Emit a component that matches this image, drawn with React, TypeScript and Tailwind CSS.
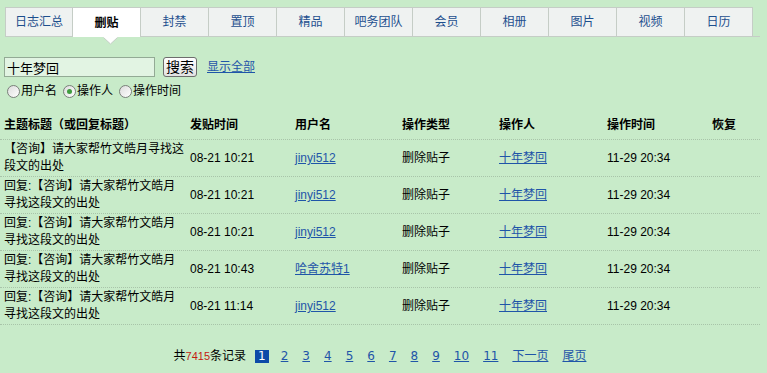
import React from 'react'

const tabs = ['日志汇总', '删贴', '封禁', '置顶', '精品', '吧务团队', '会员', '相册', '图片', '视频', '日历']

const rows = [
  { title: '【咨询】请大家帮竹文皓月寻找这段文的出处', time: '08-21 10:21', user: 'jinyi512' },
  { title: '回复:【咨询】请大家帮竹文皓月寻找这段文的出处', time: '08-21 10:21', user: 'jinyi512' },
  { title: '回复:【咨询】请大家帮竹文皓月寻找这段文的出处', time: '08-21 10:21', user: 'jinyi512' },
  { title: '回复:【咨询】请大家帮竹文皓月寻找这段文的出处', time: '08-21 10:43', user: '哈舍苏特1' },
  { title: '回复:【咨询】请大家帮竹文皓月寻找这段文的出处', time: '08-21 11:14', user: 'jinyi512' },
]

const grid = 'grid grid-cols-[190px_105px_107px_97px_108px_105px_48px] w-[760px]'

function Radio({ checked, label }: { checked?: boolean; label: string }) {
  return (
    <label className="flex items-center mr-[6px]">
      <span className="w-[13px] h-[13px] rounded-full border border-[#7a7f7a] bg-gradient-to-br from-[#dcdcdc] to-white flex items-center justify-center mr-[1px]">
        {checked && <span className="w-[5px] h-[5px] rounded-full bg-[#3f9c3f]" />}
      </span>
      <span className="text-[12px]">{label}</span>
    </label>
  )
}

export default function App() {
  return (
    <div className="w-[767px] h-[373px] overflow-hidden bg-[#c8ebc9] text-black font-['Liberation_Sans','Noto_Sans_CJK_SC',sans-serif]">
      {/* tabs */}
      <div className="pt-[7px] pl-[5px]">
        <div className="flex w-[755px] border-b border-[#c5cdc6]">
          {tabs.map((t, i) =>
            i === 1 ? (
              <div
                key={t}
                className="relative w-[68px] h-[30px] -mb-px bg-white border-t border-r border-[#c5cdc6] flex items-center justify-center text-[12px] font-bold text-black"
              >
                {t}
                <svg className="absolute left-[30px] top-[29px]" width="15" height="8" viewBox="0 0 15 8">
                  <polygon points="0,0 15,0 7.5,7" fill="white" />
                  <polyline points="0.5,0.5 7.5,7 14.5,0.5" fill="none" stroke="#c5cdc6" />
                </svg>
              </div>
            ) : (
              <div
                key={t}
                className={`w-[68px] h-[29px] bg-[#eff2f1] border-t border-r border-[#c5cdc6] flex items-center justify-center text-[12px] text-[#1d4f8e] ${
                  i === 0 ? 'border-l' : ''
                }`}
              >
                {t}
              </div>
            )
          )}
        </div>
      </div>

      {/* search */}
      <div className="flex items-center pl-[4px] mt-[20px] h-[20px]">
        <input
          readOnly
          value="十年梦回"
          className="w-[151px] h-[20px] border border-[#93aa95] bg-[#e2f4e3] px-[2px] text-[13px] outline-none"
        />
        <button className="ml-[8px] w-[34px] h-[20px] rounded-[3px] border border-[#6d6d6d] bg-gradient-to-b from-white to-[#e2e2e2] text-[14px] leading-none">
          搜索
        </button>
        <a className="ml-[10px] text-[12px] text-[#1f55a8] underline">显示全部</a>
      </div>

      <div className="flex items-center pl-[7px] mt-[6px] h-[16px]">
        <Radio label="用户名" />
        <Radio checked label="操作人" />
        <Radio label="操作时间" />
      </div>

      {/* table */}
      <div className="mt-[11px]">
        <div className={`${grid} h-[30px] items-center border-b border-dotted border-[#a8c4a9] text-[12px] font-bold`}>
          <div className="pl-[4px]">主题标题（或回复标题）</div>
          <div>发贴时间</div>
          <div>用户名</div>
          <div>操作类型</div>
          <div>操作人</div>
          <div>操作时间</div>
          <div>恢复</div>
        </div>
        {rows.map((r, i) => (
          <div key={i} className={`${grid} h-[37px] items-center border-b border-dotted border-[#a8c4a9] text-[12px]`}>
            <div className="pl-[4px] pr-[4px] leading-[17px]">{r.title}</div>
            <div>{r.time}</div>
            <div>
              <a className="text-[#1f55a8] underline">{r.user}</a>
            </div>
            <div>删除贴子</div>
            <div>
              <a className="text-[#1f55a8] underline">十年梦回</a>
            </div>
            <div>11-29 20:34</div>
            <div />
          </div>
        ))}
      </div>

      {/* pagination */}
      <div className="w-[760px] flex justify-center items-center mt-[23px] h-[16px] text-[12px]">
        <span>
          共<span className="text-[11px] text-[#c41a0f]">7415</span>条记录
        </span>
        <span className="ml-[9px] h-[13px] px-[3px] bg-[#0c4aa8] text-white flex items-center font-['DejaVu_Sans',sans-serif]">
          1
        </span>
        {['2', '3', '4', '5', '6', '7', '8', '9', '10', '11'].map((p, i) => (
          <a
            key={p}
            className={`${i === 0 ? 'ml-[12px]' : 'ml-[14px]'} text-[#1f55a8] underline font-['DejaVu_Sans',sans-serif]`}
          >
            {p}
          </a>
        ))}
        <a className="ml-[14px] text-[#1f55a8] underline">下一页</a>
        <a className="ml-[14px] text-[#1f55a8] underline">尾页</a>
      </div>
    </div>
  )
}
